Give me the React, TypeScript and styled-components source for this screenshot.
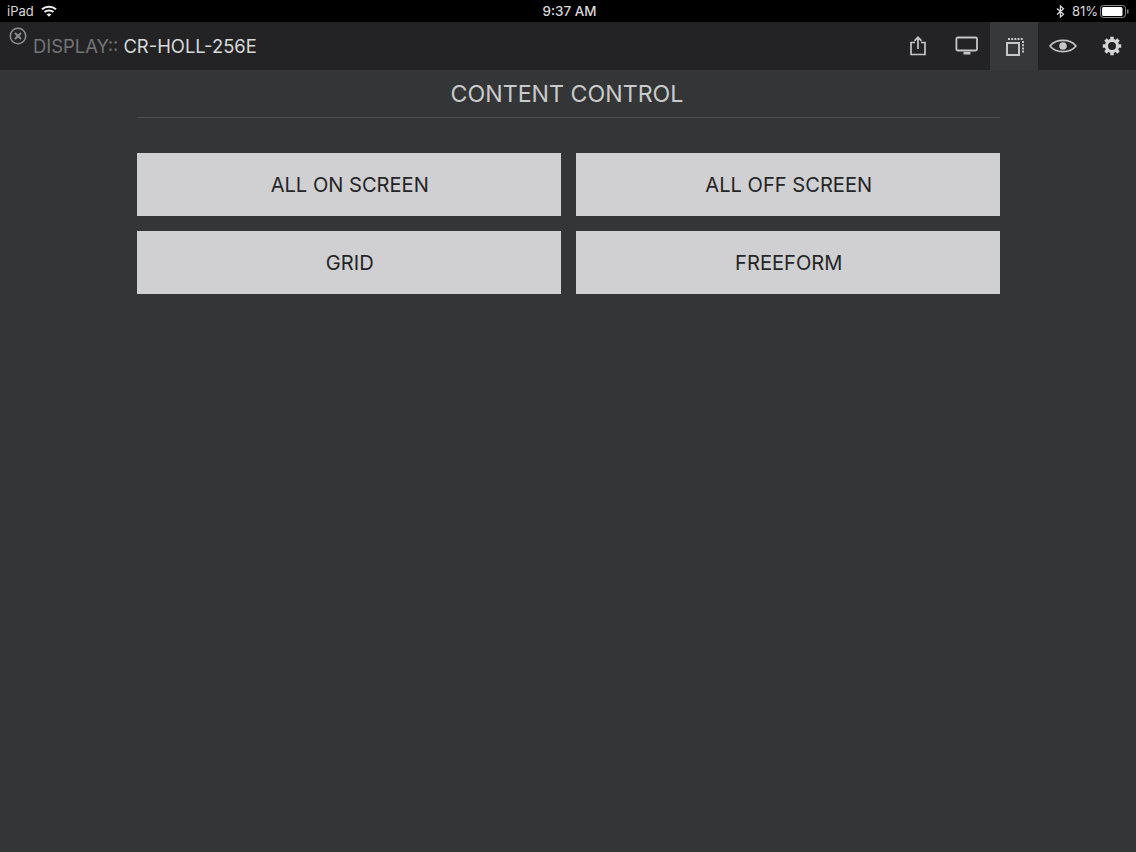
import React from "react";
import styled, { createGlobalStyle } from "styled-components";

const GlobalStyle = createGlobalStyle`
  html, body {
    margin: 0;
    padding: 0;
    background: #343537;
  }
`;

const Page = styled.div`
  width: 1136px;
  height: 852px;
  overflow: hidden;
  display: flex;
  flex-direction: column;
  background: #343537;
  font-family: Inter, "Liberation Sans", sans-serif;
`;

const StatusBar = styled.div`
  height: 22px;
  flex: none;
  display: grid;
  grid-template-columns: 1fr auto 1fr;
  align-items: center;
  padding: 0 7px;
  background: #000;
  color: #d8d8d8;
  font-size: 13px;
`;

const StatusLeft = styled.div`
  display: flex;
  align-items: center;
  gap: 7px;
`;

const StatusTime = styled.div`
  font-weight: 500;
  font-size: 13.4px;
  padding-left: 3px;
`;

const StatusRight = styled.div`
  display: flex;
  align-items: center;
  justify-content: flex-end;
  gap: 2px;
`;

const BatteryPercent = styled.span`
  margin-left: 5px;
`;

const Toolbar = styled.div`
  height: 48px;
  flex: none;
  display: flex;
  align-items: stretch;
  background: #232325;
  position: relative;
`;

const CloseButton = styled.div`
  position: absolute;
  left: 9px;
  top: 5px;
  display: flex;
`;

const DisplayTitle = styled.div`
  flex: 1;
  display: flex;
  align-items: center;
  gap: 5px;
  padding-left: 33px;
  padding-bottom: 1px;
  font-size: 18.4px;
`;

const TitleLabel = styled.span`
  color: #737476;
`;

const TitleName = styled.span`
  color: #d9d9d9;
`;

const ToolGroup = styled.div`
  display: grid;
  grid-template-columns: 48px 48px 48px 50px 48px;
`;

const ToolButton = styled.div<{ $active?: boolean }>`
  display: flex;
  align-items: center;
  justify-content: center;
  background: ${(props) => (props.$active ? "#37383a" : "transparent")};
`;

const Content = styled.div`
  width: 863px;
  margin-left: 136.5px;
  display: flex;
  flex-direction: column;
`;

const Heading = styled.h1`
  margin: 0;
  height: 48px;
  box-sizing: border-box;
  border-bottom: 1px solid #4d4e50;
  padding-right: 2px;
  display: flex;
  align-items: center;
  justify-content: center;
  color: #c9cacb;
  font-size: 23.2px;
  font-weight: 400;
`;

const ButtonGrid = styled.div`
  margin-top: 35px;
  display: grid;
  grid-template-columns: 424.5px 423.5px;
  gap: 15px;
`;

const ActionButton = styled.button`
  height: 63px;
  border: 0;
  padding: 0 0 0 2px;
  background: #d0d0d2;
  color: #242527;
  font-family: inherit;
  font-size: 20.1px;
  font-weight: 400;
`;

const WifiIcon = () => (
  <svg width="16" height="12" viewBox="0 0 16 12" fill="none" stroke="#f0f0f0" strokeWidth="2.1">
    <path d="M1 4.3C4.9 .9 11.1 .9 15 4.3" />
    <path d="M3.5 7C6 4.9 10 4.9 12.5 7" />
    <path d="M8 11.8 5.5 9.2C7 8.1 9 8.1 10.5 9.2Z" fill="#f0f0f0" stroke="none" />
  </svg>
);

const BluetoothIcon = () => (
  <svg width="9" height="13" viewBox="0 0 9 13" fill="none" stroke="#e0e0e0" strokeWidth="1.2">
    <path d="M1 3.5 7.5 9.3 4.4 12V1L7.5 3.7 1 9.5" />
  </svg>
);

const BatteryIcon = () => (
  <svg width="29" height="13" viewBox="0 0 29 13">
    <rect x=".5" y=".5" width="25" height="12" rx="3" fill="none" stroke="#8a8a8a" />
    <rect x="2" y="2" width="20.5" height="9" rx="1.5" fill="#fff" />
    <rect x="27" y="4.5" width="1.5" height="4" fill="#8a8a8a" />
  </svg>
);

const CloseIcon = () => (
  <svg width="18" height="18" viewBox="0 0 18 18" fill="none" stroke="#8f9092" strokeWidth="1.5">
    <circle cx="9" cy="9" r="7.7" />
    <path d="M6 6l6 6M12 6l-6 6" strokeWidth="1.8" />
  </svg>
);

const ShareIcon = () => (
  <svg width="18" height="20" viewBox="0 0 18 20" fill="none" stroke="#c6c6c6" strokeWidth="1.7">
    <path d="M6 6.5H2v12h14v-12h-4" />
    <path d="M9 13V2M5.5 4.8 9 1.3l3.5 3.5" />
  </svg>
);

const MonitorIcon = () => (
  <svg width="24" height="20" viewBox="0 0 24 20" fill="none" stroke="#c6c6c6" strokeWidth="1.8">
    <rect x="2.4" y="1.5" width="20.6" height="13" rx="1.5" />
    <path d="M9.5 17.2h7" strokeWidth="2.6" />
  </svg>
);

const LayersIcon = () => (
  <svg width="19" height="19" viewBox="0 0 19 19" fill="none" stroke="#c6c6c6">
    <rect x="2" y="6" width="12" height="12" strokeWidth="2" />
    <path d="M3 2h15.5" strokeWidth="2" strokeDasharray="2 1.2" />
    <path d="M18 4v12" strokeWidth="2" strokeDasharray="2 1.2" />
  </svg>
);

const EyeIcon = () => (
  <svg width="28" height="18" viewBox="0 0 28 18" fill="none" stroke="#c6c6c6" strokeWidth="1.6">
    <path d="M1 9C7 1.5 21 1.5 27 9 21 16.5 7 16.5 1 9Z" />
    <circle cx="14" cy="9" r="3.8" fill="#c6c6c6" stroke="none" />
  </svg>
);

const GearIcon = () => (
  <svg width="20" height="20" viewBox="0 0 20 20">
    <circle cx="10" cy="10" r="5.6" fill="none" stroke="#d4d4d4" strokeWidth="3.2" />
    <path
      d="M10 .8v2.6M10 16.6v2.6M.8 10h2.6M16.6 10h2.6M3.5 3.5l1.9 1.9M14.6 14.6l1.9 1.9M16.5 3.5l-1.9 1.9M5.4 14.6l-1.9 1.9"
      stroke="#d4d4d4"
      strokeWidth="3.6"
    />
  </svg>
);

const actions = ["ALL ON SCREEN", "ALL OFF SCREEN", "GRID", "FREEFORM"];

export default function App() {
  return (
    <Page>
      <GlobalStyle />
      <StatusBar>
        <StatusLeft>
          <span>iPad</span>
          <WifiIcon />
        </StatusLeft>
        <StatusTime>9:37 AM</StatusTime>
        <StatusRight>
          <BluetoothIcon />
          <BatteryPercent>81%</BatteryPercent>
          <BatteryIcon />
        </StatusRight>
      </StatusBar>
      <Toolbar>
        <CloseButton>
          <CloseIcon />
        </CloseButton>
        <DisplayTitle>
          <TitleLabel>DISPLAY::</TitleLabel>
          <TitleName>CR-HOLL-256E</TitleName>
        </DisplayTitle>
        <ToolGroup>
          <ToolButton>
            <ShareIcon />
          </ToolButton>
          <ToolButton>
            <MonitorIcon />
          </ToolButton>
          <ToolButton $active>
            <LayersIcon />
          </ToolButton>
          <ToolButton>
            <EyeIcon />
          </ToolButton>
          <ToolButton>
            <GearIcon />
          </ToolButton>
        </ToolGroup>
      </Toolbar>
      <Content>
        <Heading>CONTENT CONTROL</Heading>
        <ButtonGrid>
          {actions.map((label) => (
            <ActionButton key={label}>{label}</ActionButton>
          ))}
        </ButtonGrid>
      </Content>
    </Page>
  );
}
